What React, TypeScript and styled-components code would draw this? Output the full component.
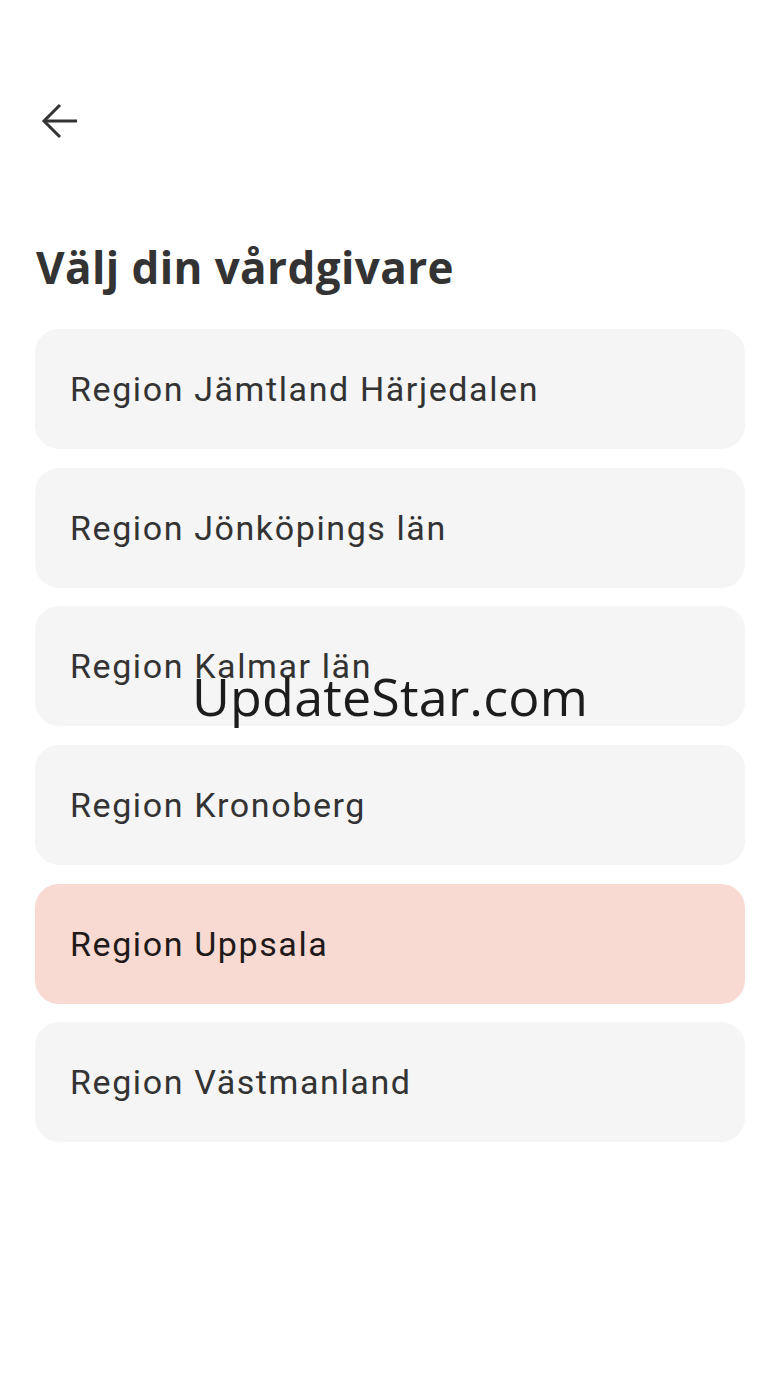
import React from 'react';
import styled, { createGlobalStyle } from 'styled-components';

const COLORS = {
  text: '#333333',
  card: '#f5f5f5',
  selected: '#f9dad2',
  selectedText: '#1f1a19',
};

const GlobalStyle = createGlobalStyle`
  html, body {
    margin: 0;
    padding: 0;
    background: #ffffff;
  }
  #root {
    min-height: 1386px;
  }
`;

const Screen = styled.div`
  position: relative;
  width: 780px;
  min-height: 1386px;
  padding: 93px 35px 0;
  box-sizing: border-box;
  background: #ffffff;
`;

const TopBar = styled.div`
  display: flex;
  align-items: center;
  height: 56px;
`;

const BackButton = styled.button`
  display: flex;
  align-items: center;
  justify-content: center;
  width: 56px;
  height: 56px;
  margin-left: -3px;
  padding: 0;
  border: none;
  background: transparent;
  cursor: pointer;
`;

const Title = styled.h1`
  margin: 90px 0 0 1px;
  font-family: 'Open Sans', 'Noto Sans', sans-serif;
  font-weight: 700;
  font-size: 44px;
  line-height: 56px;
  color: ${COLORS.text};
  letter-spacing: 0.4px;
`;

const List = styled.ul`
  display: flex;
  flex-direction: column;
  gap: 18.7px;
  margin: 34px 0 0;
  padding: 0;
  list-style: none;
`;

const Item = styled.li<{ selected?: boolean }>`
  display: flex;
  align-items: center;
  height: 120px;
  padding: 0 35px;
  border-radius: 24px;
  background: ${({ selected }) => (selected ? COLORS.selected : COLORS.card)};
  color: ${({ selected }) => (selected ? COLORS.selectedText : COLORS.text)};
  font-family: Roboto, 'Noto Sans', sans-serif;
  font-size: 34px;
  letter-spacing: 1.6px;
  cursor: pointer;
`;

const Watermark = styled.div`
  position: absolute;
  left: 192px;
  top: 660px;
  font-family: 'Open Sans', 'Noto Sans', sans-serif;
  font-size: 52px;
  color: #1c1c1c;
  letter-spacing: 0.2px;
  pointer-events: none;
`;

const regions = [
  'Region Jämtland Härjedalen',
  'Region Jönköpings län',
  'Region Kalmar län',
  'Region Kronoberg',
  'Region Uppsala',
  'Region Västmanland',
];

const BackArrow = () => (
  <svg width="40" height="40" viewBox="0 0 40 40" fill="none" stroke={COLORS.text} strokeWidth="3">
    <path d="M37 20H4" />
    <path d="M20 4L4 20l16 16" />
  </svg>
);

export default function App() {
  return (
    <>
      <GlobalStyle />
      <Screen>
        <TopBar>
          <BackButton aria-label="Tillbaka">
            <BackArrow />
          </BackButton>
        </TopBar>
        <Title>Välj din vårdgivare</Title>
        <List>
          {regions.map((name) => (
            <Item key={name} selected={name === 'Region Uppsala'}>
              {name}
            </Item>
          ))}
        </List>
        <Watermark>UpdateStar.com</Watermark>
      </Screen>
    </>
  );
}
